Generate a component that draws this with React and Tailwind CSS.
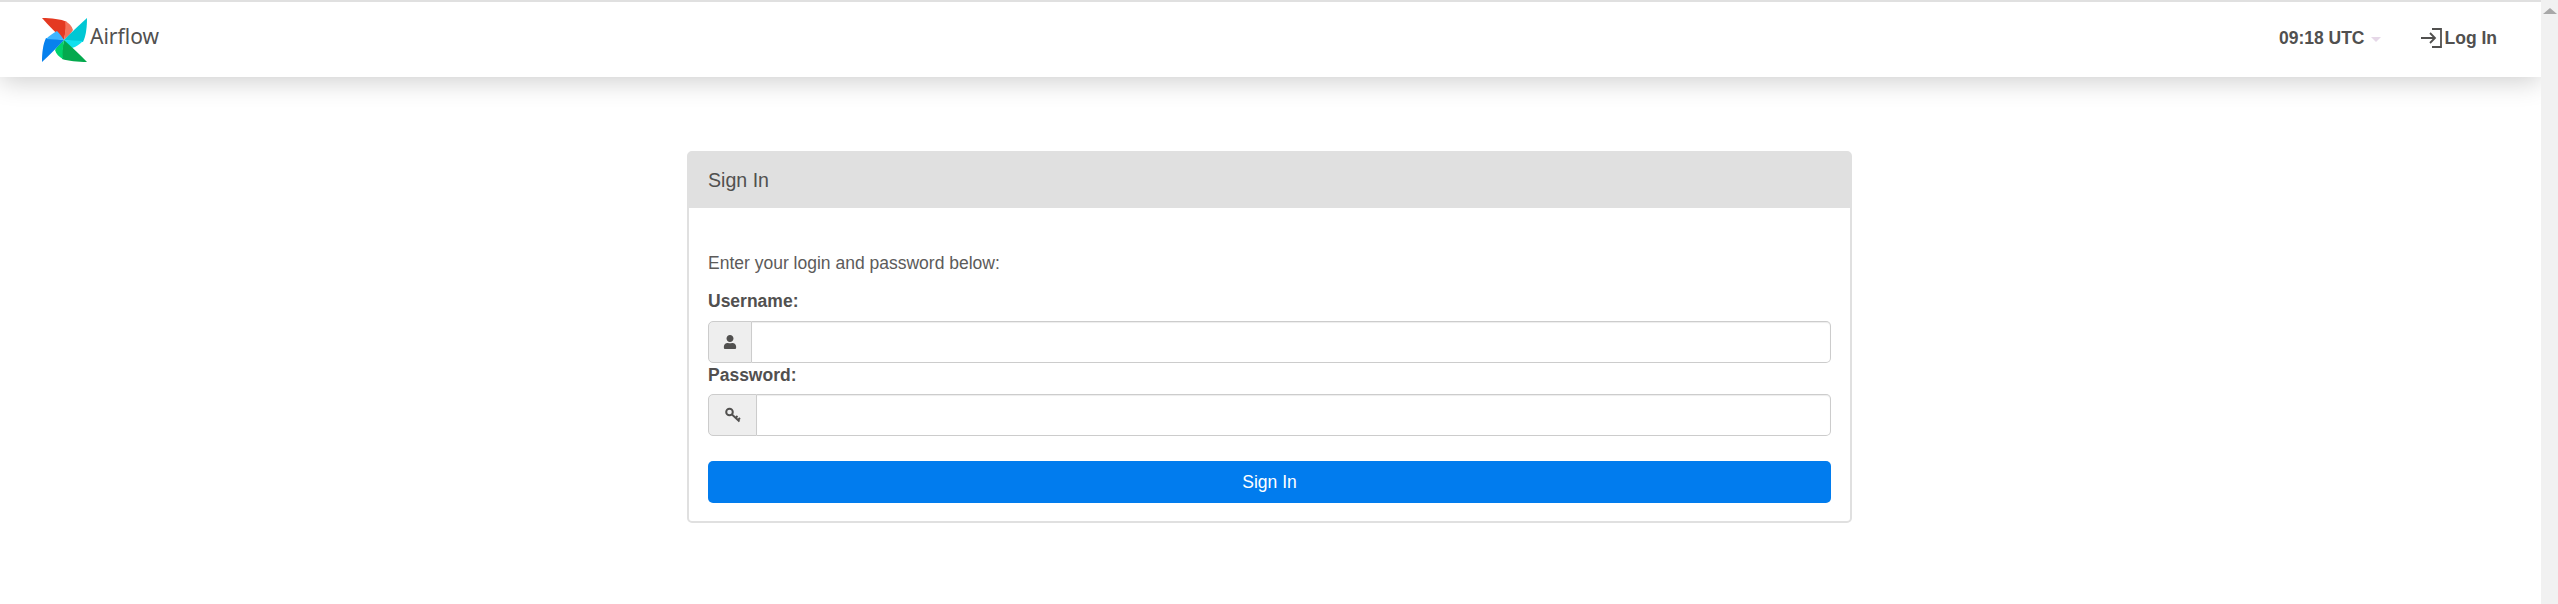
import { FaUser } from 'react-icons/fa';

function Logo() {
  return (
    <svg width="45" height="44" viewBox="0 0 45 44" className="shrink-0">
      <path d="M0 0C9 0 19 1 25 4C24 11 23 17 22 22C15 16 7 8 0 0Z" fill="#e43921" />
      <path d="M23 3C27 5 30 8 31 12C29 16 25 19 22 22C23 16 24 9 23 3Z" fill="#f4725b" />
      <path d="M45 0C45 9 44 18 41 24C36 24 29 23 22 22C29 15 37 7 45 0Z" fill="#00c7d4" />
      <path d="M41 23C38 26 34 29 30 30C27 28 24 25 22 22C28 22 35 23 41 23Z" fill="#11e1ee" />
      <path d="M45 44C36 44 26 43 20 41C19 34 21 28 22 22C30 29 38 37 45 44Z" fill="#04a94d" />
      <path d="M21 41C17 39 14 36 13 32C15 28 19 25 22 22C21 28 20 35 21 41Z" fill="#00d36b" />
      <path d="M0 44C0 35 1 26 4 20C10 20 16 21 22 22C15 29 8 37 0 44Z" fill="#0781ed" />
      <path d="M4 21C7 18 11 15 15 13C18 16 20 19 22 22C16 22 10 21 4 21Z" fill="#3fb5ff" />
    </svg>
  );
}

function LoginIcon() {
  return (
    <svg width="21" height="20" viewBox="0 0 21 20" fill="none" stroke="#51504f" strokeWidth="1.8" className="shrink-0">
      <path d="M0 10H14M9 5L14 10L9 15" />
      <path d="M11 1H20V19H11" />
    </svg>
  );
}

function KeyIcon() {
  return (
    <svg width="18" height="17" viewBox="0 0 17 17" fill="none" stroke="#51504f">
      <circle cx="5" cy="5" r="3.3" strokeWidth="2" />
      <path d="M7.5 7.5L15 14.5M11 11L13 9M13.5 13L15.5 11" strokeWidth="1.9" />
    </svg>
  );
}

function Field({ label, icon, addonWidth, inputGap }) {
  return (
    <div>
      <label className="block text-[17.5px] leading-[25px] font-bold text-[#51504f]">{label}</label>
      <div className={`flex h-[42px] ${inputGap}`}>
        <span className={`flex items-center justify-center rounded-l-[5px] border border-[#ccc] bg-[#eee] ${addonWidth}`}>
          {icon}
        </span>
        <input className="min-w-0 flex-1 rounded-r-[5px] border border-l-0 border-[#ccc] bg-white shadow-[inset_0_1px_1px_rgba(0,0,0,0.075)] outline-none" />
      </div>
    </div>
  );
}

export default function App() {
  return (
    <div className="flex h-screen overflow-hidden bg-white font-['Liberation_Sans',Arial,sans-serif] text-[#51504f]">
      <div className="min-w-0 flex-1">
        <nav className="flex h-[77px] items-center justify-between border-t-2 border-[#e0e0e0] bg-white pr-[44px] pl-[42px] shadow-[0_4px_25px_rgba(0,0,0,0.2)]">
          <a className="flex items-center gap-[3px]">
            <Logo />
            <span className="mb-[6px] font-['Noto_Sans',sans-serif] text-[21px] text-[#51504f]">Airflow</span>
          </a>
          <div className="mb-[3px] flex items-center text-[17.5px] font-bold">
            <span>09:18 UTC</span>
            <span className="mt-[3px] ml-[6px] h-0 w-0 border-x-[5px] border-t-[5px] border-x-transparent border-t-[#e6d8e8]"></span>
            <span className="ml-[40px] flex items-center">
              <LoginIcon />
              <span className="ml-[3px]">Log In</span>
            </span>
          </div>
        </nav>

        <main className="mt-[74px] ml-[687px] w-[1165px] rounded-[5px] border-2 border-[#e0e0e0]">
          <div className="flex h-[55px] items-center bg-[#e0e0e0] px-[19px] text-[19.6px]">Sign In</div>
          <div className="px-[19px] pt-[43px] pb-[18px]">
            <p className="text-[17.5px] leading-[25px] text-[#5c5b5a]">Enter your login and password below:</p>
            <div className="mt-[13px]">
              <Field label="Username:" addonWidth="w-[44px]" inputGap="mt-[7px]" icon={<FaUser className="size-[14px] text-[#51504f]" />} />
              <Field label="Password:" addonWidth="w-[49px]" inputGap="mt-[6px]" icon={<KeyIcon />} />
            </div>
            <button className="mt-[25px] h-[42px] w-full rounded-[5px] bg-[#017cee] text-[17.5px] text-white">Sign In</button>
          </div>
        </main>
      </div>

      <aside className="flex w-[17px] shrink-0 justify-center bg-[#f1f1f1] pt-[8px]">
        <span className="h-0 w-0 border-x-[7px] border-b-[6px] border-x-transparent border-b-[#a8a8a8]"></span>
      </aside>
    </div>
  );
}
